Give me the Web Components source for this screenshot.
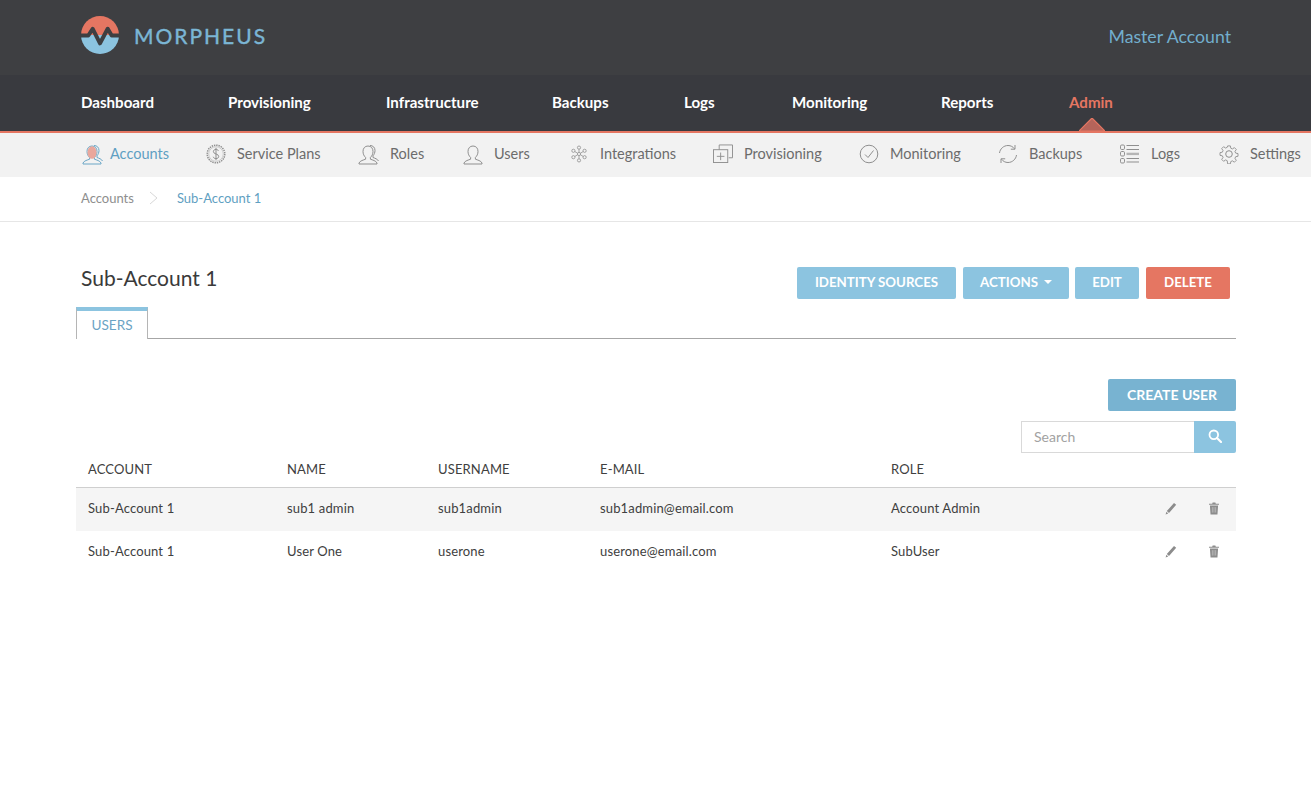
<!DOCTYPE html>
<html lang="en">
<head>
<meta charset="utf-8">
<title>Morpheus</title>
<style>
  html, body { margin: 0; background: #fff; }
  body { font-family: Lato, "Open Sans", sans-serif; color: #333; }
</style>
</head>
<body>
<app-header></app-header>
<main-nav></main-nav>
<sub-nav></sub-nav>
<bread-crumbs></bread-crumbs>
<account-page></account-page>

<script>
const FONT = 'Lato, "Open Sans", sans-serif';

class AppHeader extends HTMLElement {
  connectedCallback() {
    this.attachShadow({ mode: 'open' }).innerHTML = `
      <style>
        :host { display: flex; align-items: center; justify-content: space-between; height: 75px; background: #3e3f42; padding: 0 80px 0 81px; font-family: ${FONT}; }
        .logo { display: flex; align-items: center; gap: 15px; margin-top: -5px; }
        .name { font-size: 21px; letter-spacing: 2px; color: #7bb6d5; font-weight: 400; -webkit-text-stroke: .4px #7bb6d5; }
        .acct { font-size: 17.7px; color: #72aecd; margin-top: -3px; }
        svg { display: block; }
      </style>
      <div class="logo">
        <svg width="38" height="38" viewBox="0 0 38 38">
          <path d="M0 19a19 19 0 0 1 38 0z" fill="#e57662"/>
          <path d="M0 19a19 19 0 0 0 38 0z" fill="#8cc4e0"/>
          <path d="M0 19.500h7.300l4.400-6.700L19 27.300l7.700-14.500 4 6.700H38" fill="none" stroke="#3e3f42" stroke-width="4" stroke-linejoin="round"/>
        </svg>
        <span class="name">MORPHEUS</span>
      </div>
      <div class="acct">Master Account</div>`;
  }
}

class MainNav extends HTMLElement {
  connectedCallback() {
    const items = [['Dashboard', 147], ['Provisioning', 158], ['Infrastructure', 166], ['Backups', 132], ['Logs', 108], ['Monitoring', 149], ['Reports', 128], ['Admin', 0]];
    this.attachShadow({ mode: 'open' }).innerHTML = `
      <style>
        :host { display: flex; align-items: center; box-sizing: border-box; height: 58px; background: #393a3f; border-bottom: 2px solid #e57662; padding: 0 0 3px 81px; position: relative; font-family: ${FONT}; }
        a { font-size: 15.1px; font-weight: 700; color: #fff; flex: none; }
        a.on { color: #e57662; position: relative; }
        .caret { position: absolute; left: 10px; bottom: -20px; width: 26px; height: 13px; }
      </style>
      ${items.map(([t, w]) => `<a style="${w ? `width:${w}px` : ''}" class="${t === 'Admin' ? 'on' : ''}">${t}${t === 'Admin' ? `<svg class="caret" viewBox="0 0 26 13"><path d="M0 13 13 0l13 13z" fill="#b5645a" stroke="#e57662" stroke-width="1.2"/></svg>` : ''}</a>`).join('')}`;
  }
}

const STROKE = 'fill="none" stroke="#8f8f8f" stroke-width="1"';
const PERSON = (fill, stroke) => `<path d="M10 3c3.200 0 5 2.400 5 5.400 0 2.400-1 4.800-2.600 6v1.800c2 .8 5.600 1.500 6.600 3.800v1H1v-1c1-2.300 4.600-3 6.600-3.800v-1.800C6 13.200 5 10.800 5 8.400 5 5.400 6.800 3 10 3z" fill="${fill}" stroke="${stroke}"/>`;
const ICONS = {
  accounts: `<svg width="22" height="22" viewBox="0 0 22 22"><path d="M12 2.500c3 0 5 2 5 5 0 2-.8 4-2 5.300v1.700c2 .8 4.500 1.500 5.500 3.500" fill="none" stroke="#6aa6c6"/>${PERSON('none', '#6aa6c6')}<ellipse cx="10" cy="9.500" rx="4.500" ry="6.300" fill="#eaa79c"/></svg>`,
  plans: `<svg width="22" height="22" viewBox="0 0 22 22"><circle cx="11" cy="11" r="8.800" fill="none" stroke="#8f8f8f" stroke-width="1.500" stroke-dasharray="1.400 .9"/><circle cx="11" cy="11" r="7.300" fill="none" stroke="#b0b0b0" stroke-width=".6"/><path d="M13.500 8c-.5-1.200-1.400-1.600-2.500-1.600-1.500 0-2.600.8-2.600 2.200 0 3 5.300 1.800 5.300 4.800 0 1.400-1.200 2.200-2.700 2.200-1.300 0-2.400-.6-2.800-1.800M11 4.800v12.400" ${STROKE}/></svg>`,
  roles: `<svg width="22" height="22" viewBox="0 0 22 22"><path d="M12 2.500c3 0 5 2 5 5 0 2-.8 4-2 5.300v1.700c2 .8 4.500 1.500 5.500 3.500" ${STROKE}/>${PERSON('none', '#8f8f8f')}</svg>`,
  users: `<svg width="20" height="22" viewBox="0 0 20 22">${PERSON('none', '#8f8f8f')}</svg>`,
  integrations: `<svg width="16" height="18" viewBox="0 0 20 22"><g ${STROKE} stroke-width="1.200"><circle cx="10" cy="11" r="2"/><circle cx="10" cy="3" r="2"/><circle cx="10" cy="19" r="2"/><circle cx="3" cy="7" r="2"/><circle cx="17" cy="7" r="2"/><circle cx="3" cy="15" r="2"/><circle cx="17" cy="15" r="2"/><path d="M10 5v4M10 13v4M4.800 8l3.400 2M15.200 8l-3.400 2M4.800 14l3.400-2M15.200 14l-3.400-2"/></g></svg>`,
  provisioning: `<svg width="20" height="19" viewBox="0 0 21 20"><g ${STROKE}><path d="M6.500 6V1h14v13.500h-4"/><rect x=".5" y="6" width="15" height="13.500"/><path d="M8 9v8M4 13h8"/></g></svg>`,
  monitoring: `<svg width="20" height="20" viewBox="0 0 20 20"><g ${STROKE}><circle cx="10" cy="10" r="8.800"/><path d="M6 10.500l3 3 5.500-7"/></g></svg>`,
  backups: `<svg width="20" height="20" viewBox="0 0 20 20"><g ${STROKE}><path d="M1.500 9C2 5 5.500 1.500 10 1.500c2.800 0 5 1.300 6.500 3.300M18.500 11c-.5 4-4 7.500-8.500 7.500-2.800 0-5-1.300-6.500-3.300"/><path d="M17 1v4.200h-4.200M3 19v-4.200h4.200"/></g></svg>`,
  logs: `<svg width="20" height="20" viewBox="0 0 20 20"><g ${STROKE}><rect x=".5" y="1" width="4" height="4.500" rx="1.200"/><rect x=".5" y="7.500" width="4" height="4.500" rx="1.200"/><rect x=".5" y="14.500" width="4" height="4.500" rx="1.200"/><path d="M6.500 1.500H19M6.500 5.500H19M6.500 14.500H19M6.500 18H19"/></g><path d="M6.500 8.700h12.500v2.400H6.500z" fill="#b5b5b5"/></svg>`,
  settings: `<svg width="20" height="20" viewBox="0 0 20 20"><g ${STROKE}><circle cx="10" cy="10" r="3.300"/><path d="M8.500 1h3l.5 2.600 1.800.8L16 2.900l2.100 2.100-1.500 2.200.8 1.800 2.600.5v3l-2.600.5-.8 1.800 1.500 2.200-2.100 2.100-2.200-1.500-1.800.8-.5 2.600h-3L8 17.400l-1.800-.8L4 18.100 1.900 16l1.500-2.200-.8-1.800L0 11.500v-3l2.600-.5.8-1.800L1.900 4 4 1.900l2.200 1.500L8 2.600z" transform="translate(1 1) scale(.9)"/></g></svg>`
};

class SubNavItem extends HTMLElement {
  connectedCallback() {
    this.attachShadow({ mode: 'open' }).innerHTML = `
      <style>
        :host { display: flex; align-items: center; flex: none; color: #6c6c6c; font-size: 14.5px; }
        :host([active]) { color: #5f9fc2; }
        .icon { display: flex; justify-content: center; width: 22px; margin-right: 10px; }
        :host([active]) .icon { margin-right: 6px; }
        .txt { padding-bottom: 3px; }
      </style>
      <span class="icon"><slot name="icon"></slot></span>
      <span class="txt"><slot></slot></span>`;
  }
}

class SubNav extends HTMLElement {
  connectedCallback() {
    const items = [
      ['accounts', 'Accounts', 123], ['plans', 'Service Plans', 153], ['roles', 'Roles', 104], ['users', 'Users', 106],
      ['integrations', 'Integrations', 144], ['provisioning', 'Provisioning', 146], ['monitoring', 'Monitoring', 139],
      ['backups', 'Backups', 122], ['logs', 'Logs', 99], ['settings', 'Settings', 0]
    ];
    this.attachShadow({ mode: 'open' }).innerHTML = `
      <style>
        :host { display: flex; align-items: center; height: 44px; background: #f2f2f2; padding-left: 82px; overflow: hidden; font-family: ${FONT}; }
      </style>
      ${items.map(([k, t, w], i) => `<sub-nav-item ${i === 0 ? 'active' : ''} style="${w ? `width:${w}px` : ''}"><span slot="icon">${ICONS[k]}</span>${t}</sub-nav-item>`).join('')}`;
  }
}

class BreadCrumbs extends HTMLElement {
  connectedCallback() {
    this.attachShadow({ mode: 'open' }).innerHTML = `
      <style>
        :host { display: flex; align-items: center; box-sizing: border-box; height: 45px; border-bottom: 1px solid #e6e6e6; padding: 0 0 2px 81px; font-family: ${FONT}; font-size: 13px; color: #8e8e8e; }
        svg { margin: 0 19px 0 15px; }
        b { font-weight: 400; color: #5f9fc2; }
      </style>
      <span>Accounts</span>
      <svg width="9" height="14" viewBox="0 0 9 14"><path d="M1 1l7 6-7 6" fill="none" stroke="#d8d8d8"/></svg>
      <b>Sub-Account 1</b>`;
  }
}

class UiButton extends HTMLElement {
  connectedCallback() {
    this.attachShadow({ mode: 'open' }).innerHTML = `
      <style>
        :host { display: inline-flex; align-items: center; justify-content: center; box-sizing: border-box; height: 32px; padding-bottom: 2px; border-radius: 2px; background: var(--bg, #8cc4e0); color: #fff; font-size: var(--size, 13.3px); font-weight: 700; white-space: nowrap; }
      </style>
      <slot></slot>`;
  }
}

class SearchBox extends HTMLElement {
  connectedCallback() {
    this.attachShadow({ mode: 'open' }).innerHTML = `
      <style>
        :host { display: flex; width: 215px; height: 32px; box-sizing: border-box; font-size: 14px; }
        .field { flex: 1; display: flex; align-items: center; box-sizing: border-box; padding: 0 0 1px 12px; border: 1px solid #d9d9d9; border-right: 0; color: #a2a2a2; }
        .go { width: 42px; display: flex; align-items: center; justify-content: center; padding-bottom: 2px; box-sizing: border-box; background: #8cc4e0; border-radius: 0 2px 2px 0; }
      </style>
      <div class="field">Search</div>
      <div class="go"><svg width="14" height="14" viewBox="0 0 14 14"><circle cx="5.800" cy="5.800" r="4.300" fill="none" stroke="#fff" stroke-width="1.800"/><path d="M9 9l4 4" stroke="#fff" stroke-width="2.200" stroke-linecap="round"/></svg></div>`;
  }
}

class UsersTable extends HTMLElement {
  connectedCallback() {
    const rows = [
      ['Sub-Account 1', 'sub1 admin', 'sub1admin', 'sub1admin@email.com', 'Account Admin'],
      ['Sub-Account 1', 'User One', 'userone', 'userone@email.com', 'SubUser']
    ];
    const actions = `
      <svg width="12" height="13" viewBox="0 0 12 13"><path d="M9 1l2.200 1.800L4 11 1.800 9.100zM1.400 9.800l1.800 1.600L.6 12.600z" fill="#8c8c8c"/></svg>
      <svg width="10" height="13" viewBox="0 0 11 13"><path d="M4 0h3l.5 1.200H11v1.300H0V1.200h3.500zM1 3.300h9l-.7 9.700H1.700z" fill="#8c8c8c"/><path d="M3.700 5v6M5.500 5v6M7.300 5v6" stroke="#c9c9c9" stroke-width=".7"/></svg>`;
    this.attachShadow({ mode: 'open' }).innerHTML = `
      <style>
        :host { display: block; font-size: 13px; color: #404040; }
        .row { display: grid; grid-template-columns: 199px 151px 162px 291px 1fr 96px; align-items: center; box-sizing: border-box; height: 43px; padding: 0 0 3px 12px; letter-spacing: .15px; }
        .row.head { height: 35px; border-bottom: 1px solid #cfcfcf; padding-bottom: 2px; }
        .row.odd { background: #f5f5f5; }
        .acts { display: flex; align-items: center; justify-content: space-between; padding-right: 17px; padding-left: 25px; }
      </style>
      <div class="row head"><span>ACCOUNT</span><span>NAME</span><span>USERNAME</span><span>E-MAIL</span><span>ROLE</span><span></span></div>
      ${rows.map((r, i) => `<div class="row ${i === 0 ? 'odd' : ''}">${r.map(c => `<span>${c}</span>`).join('')}<span class="acts">${actions}</span></div>`).join('')}`;
  }
}

class AccountPage extends HTMLElement {
  connectedCallback() {
    this.attachShadow({ mode: 'open' }).innerHTML = `
      <style>
        :host { display: block; padding: 44px 75px 0 76px; font-family: ${FONT}; }
        .head { display: flex; justify-content: space-between; align-items: flex-start; height: 41px; }
        h1 { margin: 0 0 0 5px; font-size: 21px; font-weight: 400; color: #3a3a3a; line-height: 24px; }
        .btns { display: flex; gap: 7px; margin: 1px 6px 0 0; }
        .tabs { height: 31px; border-bottom: 1px solid #a6a6a6; }
        .tab { display: inline-flex; align-items: center; justify-content: center; box-sizing: border-box; width: 72px; height: 32px; padding-bottom: 1px; border-top: 4px solid #8cc4e0; border-left: 1px solid #b5b5b5; border-right: 1px solid #b5b5b5; background: #fff; color: #6ba4c4; font-size: 13.6px; }
        .create { display: flex; justify-content: flex-end; margin-top: 40px; }
        .search { display: flex; justify-content: flex-end; margin: 10px 0 0; }
      </style>
      <div class="head">
        <h1>Sub-Account 1</h1>
        <div class="btns">
          <ui-button style="width:159px">IDENTITY SOURCES</ui-button>
          <ui-button style="width:106px">ACTIONS <svg style="margin-left:6px" width="8" height="4" viewBox="0 0 8 4"><path d="M0 0h8L4 4z" fill="#fff"/></svg></ui-button>
          <ui-button style="width:64px;margin-left:-1px">EDIT</ui-button>
          <ui-button style="width:84px;--bg:#e57662">DELETE</ui-button>
        </div>
      </div>
      <div class="tabs"><div class="tab">USERS</div></div>
      <div class="create"><ui-button style="width:128px;--bg:#78b3d1;--size:14px">CREATE USER</ui-button></div>
      <div class="search"><search-box></search-box></div>
      <users-table></users-table>`;
  }
}

customElements.define('app-header', AppHeader);
customElements.define('main-nav', MainNav);
customElements.define('sub-nav-item', SubNavItem);
customElements.define('sub-nav', SubNav);
customElements.define('bread-crumbs', BreadCrumbs);
customElements.define('ui-button', UiButton);
customElements.define('search-box', SearchBox);
customElements.define('users-table', UsersTable);
customElements.define('account-page', AccountPage);
</script>
</body>
</html>
